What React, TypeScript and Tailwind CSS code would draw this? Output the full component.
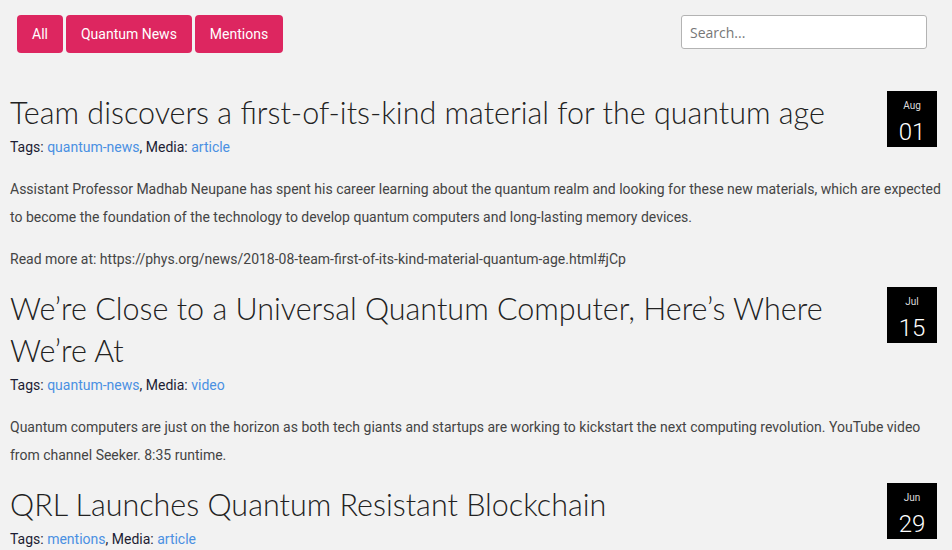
const filters = ["All", "Quantum News", "Mentions"];

const posts = [
  {
    title: "Team discovers a first-of-its-kind material for the quantum age",
    tag: "quantum-news",
    media: "article",
    month: "Aug",
    day: "01",
    body: [
      "Assistant Professor Madhab Neupane has spent his career learning about the quantum realm and looking for these new materials, which are expected to become the foundation of the technology to develop quantum computers and long-lasting memory devices.",
      "Read more at: https://phys.org/news/2018-08-team-first-of-its-kind-material-quantum-age.html#jCp",
    ],
  },
  {
    title: "We\u2019re Close to a Universal Quantum Computer, Here\u2019s Where We\u2019re At",
    tag: "quantum-news",
    media: "video",
    month: "Jul",
    day: "15",
    body: [
      "Quantum computers are just on the horizon as both tech giants and startups are working to kickstart the next computing revolution. YouTube video from channel Seeker. 8:35 runtime.",
    ],
  },
  {
    title: "QRL Launches Quantum Resistant Blockchain",
    tag: "mentions",
    media: "article",
    month: "Jun",
    day: "29",
    body: [
      "The Quantum Resistant Ledger has launched its mainnet, a blockchain designed to stay secure against attacks from future quantum computers.",
    ],
  },
];

export default function App() {
  return (
    <div className="min-h-screen bg-[#f2f2f2] font-['Roboto',sans-serif] text-[14px]">
      {/* filter bar */}
      <div className="flex items-start justify-between pl-[17px] pr-[25px] pt-[15px]">
        <div className="flex gap-[3px]">
          {filters.map((f) => (
            <button
              key={f}
              className="h-[38px] rounded-[4px] bg-[#dd2660] px-[15px] text-[14px] text-white"
            >
              {f}
            </button>
          ))}
        </div>
        <input
          placeholder="Search..."
          className="h-[34px] w-[246px] rounded-[3px] border border-[#b3b3b3] bg-white px-[8px] font-['Open_Sans',sans-serif] text-[14px] text-[#333] placeholder:text-[#777] outline-none"
        />
      </div>

      {/* posts */}
      <div className="mt-[38px] flex flex-col gap-[14px] pl-[10px] pr-[8px]">
        {posts.map((p) => (
          <article key={p.title} className="flow-root">
            <div className="float-right ml-[10px] mr-[7px] flex h-[56px] w-[50px] flex-col items-center bg-black text-white">
              <span className="mt-[9px] text-[10px] leading-[12px] text-[#ddd]">{p.month}</span>
              <span className="mt-[5px] text-[24px] font-light leading-[30px]">{p.day}</span>
            </div>
            <h2 className="font-['Lato',sans-serif] text-[30.5px] font-light leading-[42px] text-[#222]">
              {p.title}
            </h2>
            <div className="leading-[28px] text-[#1c1c33]">
              Tags: <a className="text-[#4a90e2]">{p.tag}</a>, Media:{" "}
              <a className="text-[#4a90e2]">{p.media}</a>
            </div>
            {p.body.map((t, i) => (
              <p key={i} className="mt-[14px] leading-[28px] text-[#444]">
                {t}
              </p>
            ))}
          </article>
        ))}
      </div>
    </div>
  );
}
